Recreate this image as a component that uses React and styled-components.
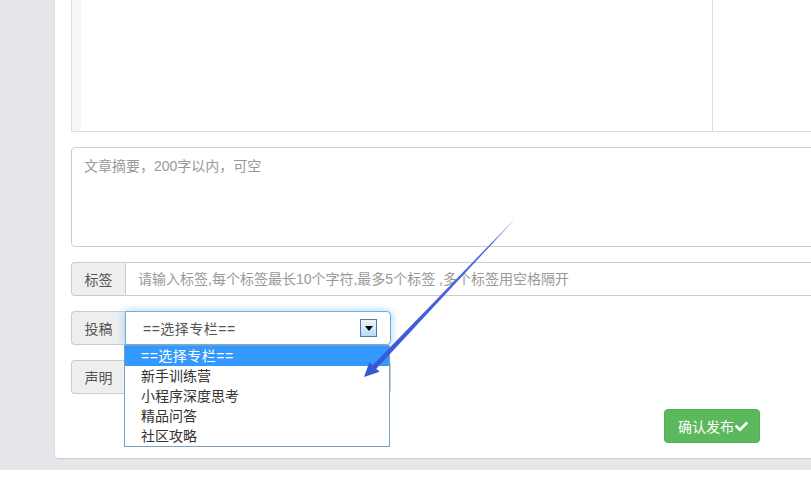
import React from "react";
import styled, { createGlobalStyle } from "styled-components";
import { FaCheck } from "react-icons/fa";

const GlobalStyle = createGlobalStyle`
html, body {
  margin: 0;
  padding: 0;
  background: #fff;
  overflow: hidden;
  font-family: "Liberation Sans", "Noto Sans CJK SC", sans-serif;
  font-size: 14px;
  color: #555;
}
`;

const columns = ["==选择专栏==", "新手训练营", "小程序深度思考", "精品问答", "社区攻略"];

const App = () => {
    return (
        <Page>
            <GlobalStyle />
            <Backdrop>
                <Panel>
                    <Editor>
                        <EditPane>
                            <Gutter />
                        </EditPane>
                        <PreviewPane />
                    </Editor>

                    <Summary placeholder="文章摘要，200字以内，可空" />

                    <InputGroup>
                        <Addon>标签</Addon>
                        <TagInput placeholder="请输入标签,每个标签最长10个字符,最多5个标签 ,多个标签用空格隔开" />
                    </InputGroup>

                    <InputGroup>
                        <Addon>投稿</Addon>
                        <SelectBox $focused>
                            <SelectText>==选择专栏==</SelectText>
                            <DropButton>
                                <svg width="8" height="5" viewBox="0 0 8 5">
                                    <path d="M0 0 H8 L4 5 Z" fill="#000" />
                                </svg>
                            </DropButton>
                            <OptionList>
                                {columns.map((c, i) => (
                                    <Option key={c} $active={i === 0}>{c}</Option>
                                ))}
                            </OptionList>
                        </SelectBox>
                    </InputGroup>

                    <InputGroup>
                        <Addon>声明</Addon>
                        <SelectBox />
                    </InputGroup>

                    <Footer>
                        <SubmitButton>
                            确认发布<FaCheck size={13} />
                        </SubmitButton>
                    </Footer>
                </Panel>
            </Backdrop>

            {/* hand drawn pointer over the screenshot */}
            <Pointer width="811" height="483" viewBox="0 0 811 483">
                <defs>
                    <linearGradient id="arrowFade" x1="513" y1="221" x2="364" y2="377" gradientUnits="userSpaceOnUse">
                        <stop offset="0" stopColor="#c9d3f5" />
                        <stop offset="0.15" stopColor="#4d6ae0" />
                        <stop offset="1" stopColor="#3656d6" />
                    </linearGradient>
                </defs>
                <polygon
                    points="512.8,220.8 372.7,365.3 369.4,362.2 364,377 379.6,371.8 376.3,368.7 513.2,221.2"
                    fill="url(#arrowFade)"
                />
            </Pointer>
        </Page>
    );
};

const Page = styled.div`
position: relative;
width: 811px;
height: 483px;
overflow: hidden;
`;

const Backdrop = styled.div`
background: #e6e7ea;
padding: 0 0 12px 55px;
`;

const Panel = styled.div`
width: 861px;
background: #fff;
padding: 0 16px 15px;
border-radius: 0 0 4px 4px;
box-shadow: 0 1px 2px rgba(0, 0, 0, 0.12);
display: flex;
flex-direction: column;
gap: 15px;
`;

const Editor = styled.div`
height: 131px;
display: flex;
border: 1px solid #ddd;
border-top: none;
`;

const EditPane = styled.div`
width: 640px;
display: flex;
border-right: 1px solid #ddd;
`;

const Gutter = styled.div`
width: 9px;
background: #f6f6f6;
`;

const PreviewPane = styled.div`
flex: 1;
`;

const Summary = styled.textarea`
box-sizing: border-box;
height: 100px;
width: 100%;
resize: none;
border: 1px solid #ccc;
border-radius: 4px;
padding: 8px 12px;
font-family: "Liberation Sans", "Noto Sans CJK SC", sans-serif;
font-size: 14px;
line-height: 20px;
outline: none;
&::placeholder {
    color: #999;
}
`;

const InputGroup = styled.div`
display: flex;
height: 34px;
`;

const Addon = styled.div`
box-sizing: border-box;
width: 54px;
display: flex;
align-items: center;
justify-content: center;
background: #eee;
border: 1px solid #ccc;
border-right: none;
border-radius: 4px 0 0 4px;
color: #555;
font-size: 14px;
`;

const TagInput = styled.input`
flex: 1;
box-sizing: border-box;
height: 34px;
border: 1px solid #ccc;
border-radius: 0 4px 4px 0;
padding: 0 12px;
font-family: "Liberation Sans", "Noto Sans CJK SC", sans-serif;
font-size: 14px;
outline: none;
&::placeholder {
    color: #999;
}
`;

const SelectBox = styled.div`
position: relative;
box-sizing: border-box;
width: 266px;
height: 34px;
display: flex;
align-items: center;
padding-left: 17px;
background: #fff;
border: 1px solid ${(p) => (p.$focused ? "#66afe9" : "#ccc")};
border-radius: 0 4px 4px 0;
box-shadow: ${(p) => (p.$focused ? "0 0 8px rgba(102, 175, 233, 0.6)" : "none")};
`;

const SelectText = styled.span`
flex: 1;
color: #555;
font-size: 14px;
letter-spacing: 0.5px;
`;

const DropButton = styled.div`
box-sizing: border-box;
width: 17px;
height: 18px;
margin-right: 13px;
display: flex;
align-items: center;
justify-content: center;
border: 1px solid #4a7aa8;
background: linear-gradient(#eaf4fd, #b9dcf7);
`;

const OptionList = styled.div`
position: absolute;
top: 33px;
left: -2px;
width: 266px;
box-sizing: border-box;
border: 1px solid #7f9db9;
background: #fff;
z-index: 2;
`;

const Option = styled.div`
height: 20px;
line-height: 20px;
padding-left: 16px;
font-size: 14px;
letter-spacing: ${(p) => (p.$active ? "0.5px" : "0")};
color: ${(p) => (p.$active ? "#fff" : "#333")};
background: ${(p) => (p.$active ? "#3399ff" : "transparent")};
`;

const Footer = styled.div`
display: flex;
justify-content: flex-end;
padding-right: 172px;
`;

const SubmitButton = styled.button`
box-sizing: border-box;
width: 96px;
height: 34px;
display: flex;
align-items: center;
gap: 1px;
padding: 0 0 0 13px;
background: #5cb85c;
border: 1px solid #4cae4c;
border-radius: 4px;
color: #fff;
font-family: "Liberation Sans", "Noto Sans CJK SC", sans-serif;
font-size: 14px;
cursor: pointer;
`;

const Pointer = styled.svg`
position: absolute;
top: 0;
left: 0;
pointer-events: none;
z-index: 3;
`;

export default App;
